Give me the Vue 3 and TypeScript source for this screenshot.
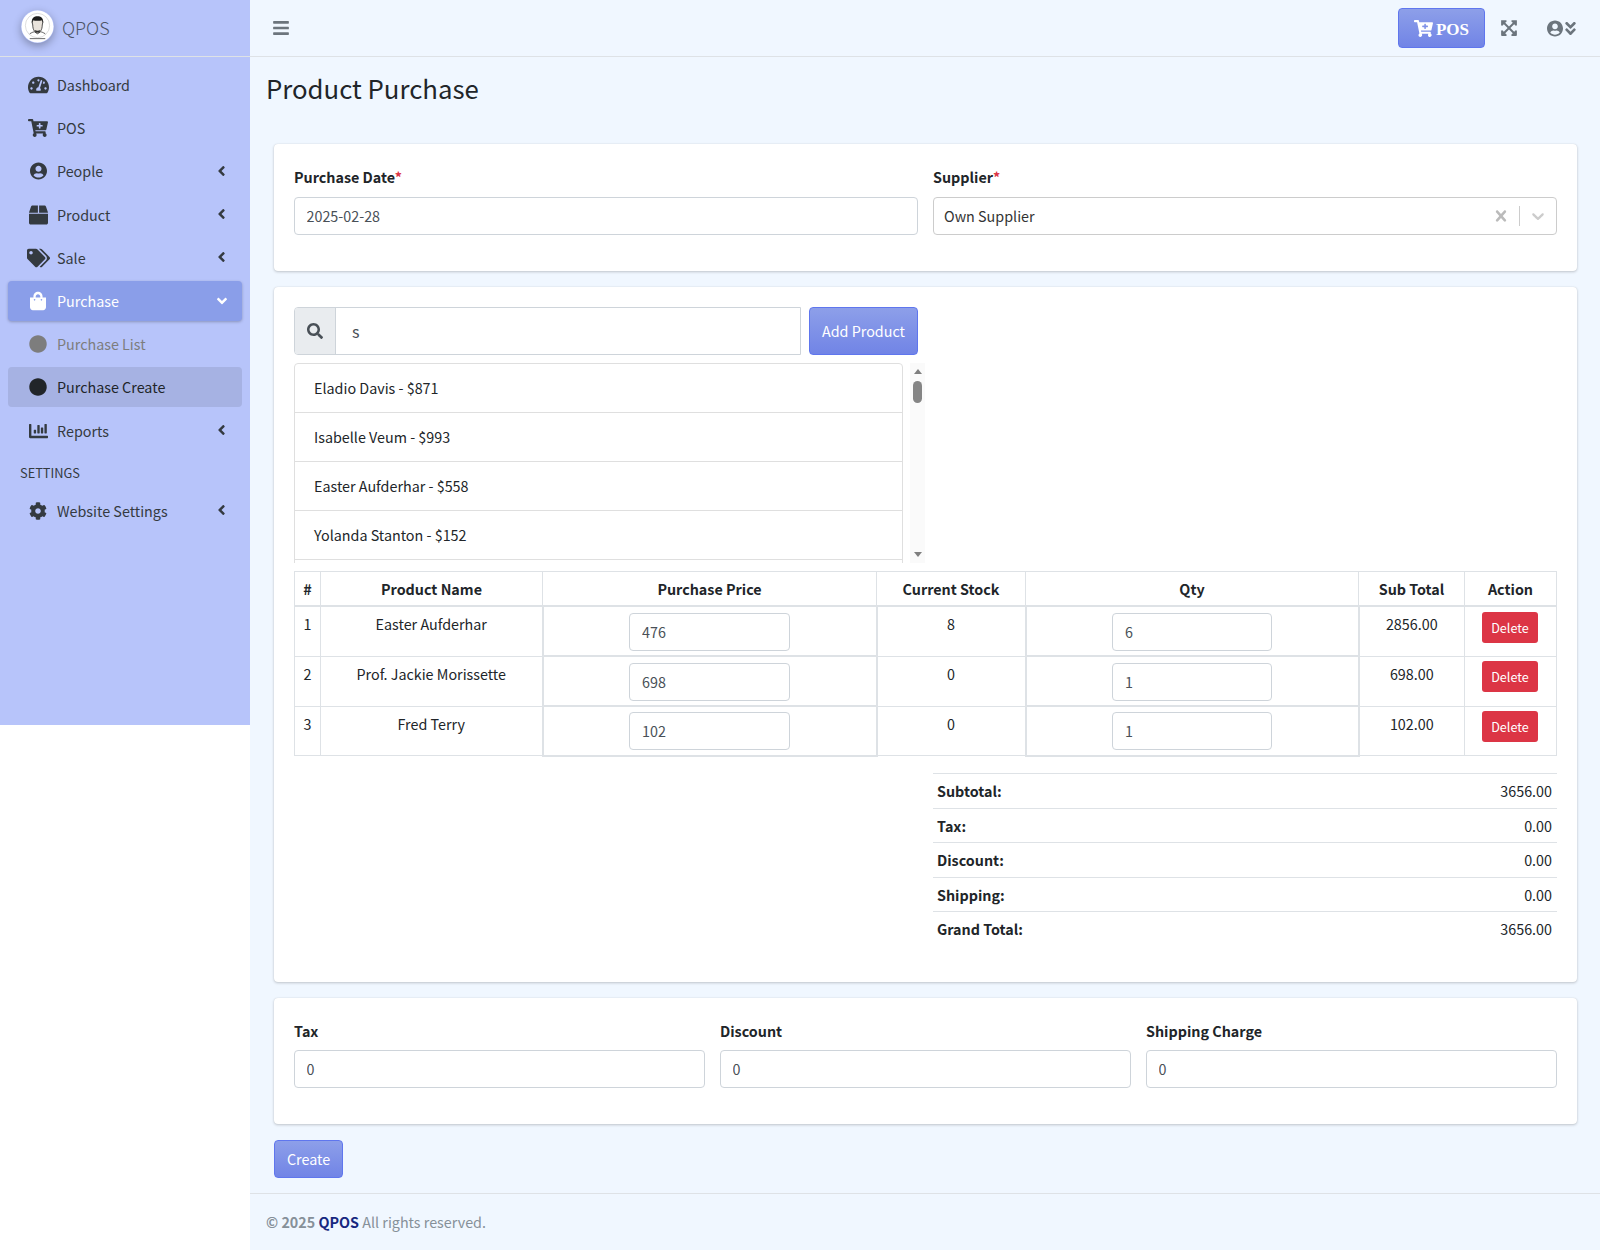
<script setup lang="ts">
type Icon = { vb: string; d: string };

const icons: Record<string, Icon> = {
  bars: { vb: '0 0 448 512', d: 'M16 132h416c8.837 0 16-7.163 16-16V76c0-8.837-7.163-16-16-16H16C7.163 60 0 67.163 0 76v40c0 8.837 7.163 16 16 16zm0 160h416c8.837 0 16-7.163 16-16v-40c0-8.837-7.163-16-16-16H16c-8.837 0-16 7.163-16 16v40c0 8.837 7.163 16 16 16zm0 160h416c8.837 0 16-7.163 16-16v-40c0-8.837-7.163-16-16-16H16c-8.837 0-16 7.163-16 16v40c0 8.837 7.163 16 16 16z' },
  search: { vb: '0 0 512 512', d: 'M505 442.7L405.3 343c-4.5-4.5-10.6-7-17-7H372c27.6-35.3 44-79.7 44-128C416 93.1 322.9 0 208 0S0 93.1 0 208s93.1 208 208 208c48.3 0 92.7-16.4 128-44v16.3c0 6.4 2.5 12.5 7 17l99.7 99.7c9.4 9.4 24.6 9.4 33.9 0l28.3-28.3c9.4-9.4 9.4-24.6.1-34zM208 336c-70.7 0-128-57.2-128-128 0-70.7 57.2-128 128-128 70.7 0 128 57.2 128 128 0 70.7-57.2 128-128 128z' },
  user: { vb: '0 0 496 512', d: 'M248 8C111 8 0 119 0 256s111 248 248 248 248-111 248-248S385 8 248 8zm0 96c48.6 0 88 39.4 88 88s-39.4 88-88 88-88-39.4-88-88 39.4-88 88-88zm0 344c-58.7 0-111.3-26.6-146.5-68.2 18.8-35.4 55.6-59.8 98.5-59.8 2.4 0 4.8.4 7.1 1.1 13 4.2 26.6 6.9 40.9 6.9 14.3 0 28-2.7 40.9-6.9 2.3-.7 4.7-1.1 7.1-1.1 42.9 0 79.7 24.4 98.5 59.8C359.3 421.4 306.7 448 248 448z' },
  left: { vb: '0 0 256 512', d: 'M31.7 239l136-136c9.4-9.4 24.6-9.4 33.9 0l22.6 22.6c9.4 9.4 9.4 24.6 0 33.9L127.9 256l96.4 96.4c9.4 9.4 9.4 24.6 0 33.9L201.7 409c-9.4 9.4-24.6 9.4-33.9 0l-136-136c-9.5-9.4-9.5-24.6-.1-34z' },
  down: { vb: '0 0 320 512', d: 'M143 352.3L7 216.3c-9.4-9.4-9.4-24.6 0-33.9l22.6-22.6c9.4-9.4 24.6-9.4 33.9 0l96.4 96.4 96.4-96.4c9.4-9.4 24.6-9.4 33.9 0l22.6 22.6c9.4 9.4 9.4 24.6 0 33.9l-136 136c-9.2 9.4-24.4 9.4-33.8 0z' },
  doubleDown: { vb: '0 0 320 512', d: 'M143 256.3L7 120.3c-9.4-9.4-9.4-24.6 0-33.9l22.6-22.6c9.4-9.4 24.6-9.4 33.9 0l96.4 96.4 96.4-96.4c9.4-9.4 24.6-9.4 33.9 0L313 86.3c9.4 9.4 9.4 24.6 0 33.9l-136 136c-9.4 9.5-24.6 9.5-34 .1zm34 192l136-136c9.4-9.4 9.4-24.6 0-33.9l-22.6-22.6c-9.4-9.4-24.6-9.4-33.9 0L160 352.1l-96.4-96.4c-9.4-9.4-24.6-9.4-33.9 0L7 278.3c-9.4 9.4-9.4 24.6 0 33.9l136 136c9.4 9.5 24.6 9.5 34 .1z' },
  cog: { vb: '0 0 512 512', d: 'M487.4 315.7l-42.6-24.6c4.3-23.2 4.3-47 0-70.2l42.6-24.6c4.9-2.8 7.1-8.6 5.5-14-11.1-35.6-30-67.8-54.7-94.6-3.8-4.1-10-5.1-14.8-2.3L380.8 110c-17.9-15.4-38.5-27.3-60.8-35.1V25.8c0-5.6-3.9-10.5-9.4-11.7-36.7-8.2-74.3-7.8-109.2 0-5.5 1.2-9.4 6.1-9.4 11.7V75c-22.2 7.9-42.8 19.8-60.8 35.1L88.7 85.5c-4.9-2.8-11-1.9-14.8 2.3-24.7 26.7-43.6 58.9-54.7 94.6-1.7 5.4.6 11.2 5.5 14L67.3 221c-4.3 23.2-4.3 47 0 70.2l-42.6 24.6c-4.9 2.8-7.1 8.6-5.5 14 11.1 35.6 30 67.8 54.7 94.6 3.8 4.1 10 5.1 14.8 2.3l42.6-24.6c17.9 15.4 38.5 27.3 60.8 35.1v49.2c0 5.6 3.9 10.5 9.4 11.7 36.7 8.2 74.3 7.8 109.2 0 5.5-1.2 9.4-6.1 9.4-11.7v-49.2c22.2-7.9 42.8-19.8 60.8-35.1l42.6 24.6c4.9 2.8 11 1.9 14.8-2.3 24.7-26.7 43.6-58.9 54.7-94.6 1.5-5.5-.7-11.3-5.6-14.1zM256 336c-44.1 0-80-35.9-80-80s35.9-80 80-80 80 35.9 80 80-35.9 80-80 80z' },
  chart: { vb: '0 0 512 512', d: 'M332.8 320h38.4c6.4 0 12.8-6.4 12.8-12.8V172.8c0-6.4-6.4-12.8-12.8-12.8h-38.4c-6.4 0-12.8 6.4-12.8 12.8v134.4c0 6.4 6.4 12.8 12.8 12.8zm96 0h38.4c6.4 0 12.8-6.4 12.8-12.8V76.8c0-6.4-6.4-12.8-12.8-12.8h-38.4c-6.4 0-12.8 6.4-12.8 12.8v230.4c0 6.4 6.4 12.8 12.8 12.8zm-288 0h38.4c6.4 0 12.8-6.4 12.8-12.8v-70.4c0-6.4-6.4-12.8-12.8-12.8h-38.4c-6.4 0-12.8 6.4-12.8 12.8v70.4c0 6.4 6.4 12.8 12.8 12.8zm96 0h38.4c6.4 0 12.8-6.4 12.8-12.8V108.8c0-6.4-6.4-12.8-12.8-12.8h-38.4c-6.4 0-12.8 6.4-12.8 12.8v198.4c0 6.4 6.4 12.8 12.8 12.8zM496 384H64V80c0-8.84-7.16-16-16-16H16C7.16 64 0 71.16 0 80v336c0 17.67 14.33 32 32 32h464c8.84 0 16-7.16 16-16v-32c0-8.84-7.16-16-16-16z' },
  bag: { vb: '0 0 448 512', d: 'M352 160v-32C352 57.42 294.579 0 224 0 153.42 0 96 57.42 96 128v32H0v272c0 44.183 35.817 80 80 80h288c44.183 0 80-35.817 80-80V160h-96zm-192-32c0-35.29 28.71-64 64-64s64 28.71 64 64v32H160v-32zm160 120c-13.255 0-24-10.745-24-24s10.745-24 24-24 24 10.745 24 24-10.745 24-24 24zm-192 0c-13.255 0-24-10.745-24-24s10.745-24 24-24 24 10.745 24 24-10.745 24-24 24z' },
  box: { vb: '0 0 512 512', d: 'M509.5 184.6L458.9 32.8C452.4 13.2 434.1 0 413.4 0H272v192h238.7c-.4-2.5-.4-5-1.2-7.4zM240 0H98.6c-20.7 0-39 13.2-45.5 32.8L2.5 184.6c-.8 2.4-.8 4.9-1.2 7.4H240V0zM0 224v240c0 26.5 21.5 48 48 48h416c26.5 0 48-21.5 48-48V224H0z' },
  tags: { vb: '0 0 640 512', d: 'M497.941 225.941L286.059 14.059A48 48 0 0 0 252.118 0H48C21.49 0 0 21.49 0 48v204.118a48 48 0 0 0 14.059 33.941l211.882 211.882c18.744 18.745 49.136 18.746 67.882 0l204.118-204.118c18.745-18.745 18.745-49.137 0-67.882zM112 160c-26.51 0-48-21.49-48-48s21.49-48 48-48 48 21.49 48 48-21.49 48-48 48zm513.941 133.823L421.823 497.941c-18.745 18.745-49.137 18.745-67.882 0l-.36-.36L527.64 323.522c16.999-16.999 26.36-39.6 26.36-63.64s-9.362-46.641-26.36-63.64L331.397 0h48.721a48 48 0 0 1 33.941 14.059l211.882 211.882c18.745 18.745 18.745 49.137 0 67.882z' },
  cart: { vb: '0 0 576 512', d: 'M504.717 320H211.572l6.545 32h268.418c15.401 0 26.816 14.301 23.403 29.319l-5.517 24.276C523.112 414.668 536 433.828 536 456c0 31.202-25.519 56.444-56.824 55.994-29.823-.429-54.35-24.631-55.155-54.447-.44-16.287 6.085-31.049 16.803-41.548H231.176C241.553 426.165 248 440.326 248 456c0 31.813-26.528 57.431-58.67 55.938-28.54-1.325-51.751-24.385-53.251-52.917-1.158-22.034 10.436-41.455 28.051-51.586L93.883 64H24C10.745 64 0 53.255 0 40V24C0 10.745 10.745 0 24 0h102.529c11.401 0 21.228 8.021 23.513 19.19L159.208 64H551.99c15.401 0 26.816 14.301 23.403 29.319l-47.273 208C525.637 312.246 515.923 320 504.717 320zM408 168h-48v-40c0-8.837-7.163-16-16-16h-16c-8.837 0-16 7.163-16 16v40h-48c-8.837 0-16 7.163-16 16v16c0 8.837 7.163 16 16 16h48v40c0 8.837 7.163 16 16 16h16c8.837 0 16-7.163 16-16v-40h48c8.837 0 16-7.163 16-16v-16c0-8.837-7.163-16-16-16z' },
  gauge: { vb: '0 0 576 512', d: 'M288 32C128.94 32 0 160.94 0 320c0 52.8 14.25 102.26 39.06 144.8 5.61 9.62 16.3 15.2 27.44 15.2h443c11.14 0 21.83-5.58 27.44-15.2C561.75 422.26 576 372.8 576 320c0-159.06-128.94-288-288-288zm0 64c14.71 0 26.58 10.13 30.32 23.65-1.11 2.26-2.64 4.23-3.45 6.67l-9.22 27.67c-5.13 3.49-10.97 6.01-17.64 6.01-17.67 0-32-14.33-32-32S270.33 96 288 96zM96 384c-17.67 0-32-14.33-32-32s14.33-32 32-32 32 14.33 32 32-14.33 32-32 32zm48-160c-17.67 0-32-14.33-32-32s14.33-32 32-32 32 14.33 32 32-14.33 32-32 32zm246.77-72.41l-61.33 184C343.13 347.33 352 364.54 352 384c0 11.72-3.38 22.55-8.88 32H232.88c-5.5-9.45-8.88-20.28-8.88-32 0-33.94 26.5-61.43 59.9-63.59l61.34-184.01c4.17-12.56 17.73-19.45 30.36-15.17 12.57 4.19 19.35 17.79 15.17 30.36zm14.66 57.2l15.52-46.55c3.47-1.29 7.13-2.23 11.05-2.23 17.67 0 32 14.33 32 32s-14.33 32-32 32c-11.38-.01-20.89-6.28-26.57-15.22zM480 384c-17.67 0-32-14.33-32-32s14.33-32 32-32 32 14.33 32 32-14.33 32-32 32z' },
  expand: { vb: '0 0 448 512', d: 'M448 344v112a23.94 23.94 0 0 1-24 24H312c-21.39 0-32.09-25.9-17-41l36.2-36.2L224 295.6 116.77 402.9 153 439c15.09 15.1 4.39 41-17 41H24a23.94 23.94 0 0 1-24-24V344c0-21.4 25.89-32.1 41-17l36.19 36.2L184.46 256 77.18 148.7 41 185c-15.1 15.1-41 4.4-41-17V56a23.94 23.94 0 0 1 24-24h112c21.39 0 32.09 25.9 17 41l-36.2 36.2L224 216.4l107.23-107.3L295 73c-15.09-15.1-4.39-41 17-41h112a23.94 23.94 0 0 1 24 24v112c0 21.4-25.89 32.1-41 17l-36.19-36.2L263.54 256l107.28 107.3L407 327.1c15.1-15.2 41-4.5 41 16.9z' },
  circle: { vb: '0 0 512 512', d: 'M256 8C119 8 8 119 8 256s111 248 248 248 248-111 248-248S393 8 256 8z' },
};

const menu = [
  { label: 'Dashboard', icon: 'gauge', w: 21 },
  { label: 'POS', icon: 'cart', w: 20 },
  { label: 'People', icon: 'user', arrow: true, w: 17 },
  { label: 'Product', icon: 'box', w: 19, arrow: true },
  { label: 'Sale', icon: 'tags', w: 23, arrow: true },
  { label: 'Purchase', icon: 'bag', w: 16, open: true },
  { label: 'Purchase List', icon: 'circle', w: 18, sub: true },
  { label: 'Purchase Create', icon: 'circle', w: 18, sub: true, current: true },
  { label: 'Reports', icon: 'chart', w: 19, arrow: true },
];

const results = ['Eladio Davis - $871', 'Isabelle Veum - $993', 'Easter Aufderhar - $558', 'Yolanda Stanton - $152'];

const rows = [
  { name: 'Easter Aufderhar', price: 476, stock: 8, qty: 6, total: '2856.00' },
  { name: 'Prof. Jackie Morissette', price: 698, stock: 0, qty: 1, total: '698.00' },
  { name: 'Fred Terry', price: 102, stock: 0, qty: 1, total: '102.00' },
];

const totals = [
  { label: 'Subtotal:', value: '3656.00' },
  { label: 'Tax:', value: '0.00' },
  { label: 'Discount:', value: '0.00' },
  { label: 'Shipping:', value: '0.00' },
  { label: 'Grand Total:', value: '3656.00' },
];

const charges = ['Tax', 'Discount', 'Shipping Charge'];
</script>

<template>
  <div class="layout">
    <aside class="sidebar">
      <div class="brand">
        <svg class="logo" viewBox="0 0 34 34">
          <circle cx="17" cy="17" r="16.5" fill="#fff" />
          <circle cx="17" cy="16" r="12.5" fill="none" stroke="#bbb" stroke-width="0.5" />
          <path d="M11.5 12.5c0-5 11-5.500 11 0l-.6 3c0 5-2.400 8-4.900 8s-4.900-3-4.900-8z" fill="#e9e3dc" stroke="#222" stroke-width="0.8" />
          <path d="M11.300 14c-1-6 2.500-7.500 5.700-7.500s6.700 1.500 5.700 7.500l-.8-3.500c-3 .8-6.800.8-9.700 0z" fill="#1c1c1c" />
          <path d="M14 20.500c2 1 4 1 6 0l-1 2.500h-4z" fill="#333" />
          <path d="M9 24.500c2.500-1.500 4-2 5-2l3 2 3-2c1 0 2.500.5 5 2" fill="none" stroke="#333" stroke-width="0.8" />
          <rect x="9" y="29" width="16" height="1" fill="#666" />
        </svg>
        <span class="brand-text">QPOS</span>
      </div>
      <nav class="menu">
        <a
          v-for="item in menu"
          :key="item.label"
          class="menu-item"
          :class="{ open: item.open, sub: item.sub, current: item.current }"
        >
          <span class="menu-icon">
            <svg :viewBox="icons[item.icon].vb" :style="{ width: item.w + 'px' }"><path :d="icons[item.icon].d" /></svg>
          </span>
          <span class="menu-label">{{ item.label }}</span>
          <svg v-if="item.arrow" class="arrow" :viewBox="icons.left.vb"><path :d="icons.left.d" /></svg>
          <svg v-if="item.open" class="arrow arrow-down" :viewBox="icons.down.vb"><path :d="icons.down.d" /></svg>
        </a>
        <div class="menu-header">SETTINGS</div>
        <a class="menu-item">
          <span class="menu-icon">
            <svg class="cog" :viewBox="icons.cog.vb"><path :d="icons.cog.d" /></svg>
          </span>
          <span class="menu-label">Website Settings</span>
          <svg class="arrow" :viewBox="icons.left.vb"><path :d="icons.left.d" /></svg>
        </a>
      </nav>
    </aside>

    <div class="main">
      <header class="topbar">
        <svg class="bars" :viewBox="icons.bars.vb"><path :d="icons.bars.d" /></svg>
        <div class="topbar-right">
          <button class="btn pos-btn">
            <svg :viewBox="icons.cart.vb"><path :d="icons.cart.d" /></svg>
            <span>POS</span>
          </button>
          <svg class="expand" :viewBox="icons.expand.vb"><path :d="icons.expand.d" /></svg>
          <div class="user-menu">
            <svg class="user-icon" :viewBox="icons.user.vb"><path :d="icons.user.d" /></svg>
            <svg class="user-arrow" :viewBox="icons.doubleDown.vb"><path :d="icons.doubleDown.d" /></svg>
          </div>
        </div>
      </header>

      <div class="page-head">
        <h1>Product Purchase</h1>
      </div>

      <section class="content">
        <div class="card">
          <div class="two-col">
            <div>
              <label class="field-label">Purchase Date<span class="req">*</span></label>
              <input class="input" value="2025-02-28" />
            </div>
            <div>
              <label class="field-label">Supplier<span class="req">*</span></label>
              <div class="select">
                <span class="select-value">Own Supplier</span>
                <svg class="select-x" viewBox="0 0 20 20"><path d="M14.348 14.849c-.469.469-1.229.469-1.697 0L10 11.819l-2.651 3.029c-.469.469-1.229.469-1.697 0-.469-.469-.469-1.229 0-1.697l2.758-3.15-2.759-3.152c-.469-.469-.469-1.228 0-1.697s1.228-.469 1.697 0L10 8.183l2.651-3.031c.469-.469 1.228-.469 1.697 0s.469 1.229 0 1.697l-2.758 3.152 2.758 3.15c.469.469.469 1.229 0 1.698z" /></svg>
                <span class="select-sep"></span>
                <svg class="select-arrow" viewBox="0 0 20 20"><path d="M4.516 7.548c.436-.446 1.043-.481 1.576 0L10 11.295l3.908-3.747c.533-.481 1.141-.446 1.574 0 .436.445.408 1.197 0 1.615-.406.418-4.695 4.502-4.695 4.502-.217.223-.502.335-.787.335s-.57-.112-.789-.335c0 0-4.287-4.084-4.695-4.502s-.436-1.17 0-1.615z" /></svg>
              </div>
            </div>
          </div>
        </div>

        <div class="card card-products">
          <div class="search-row">
            <div class="search-group">
              <span class="search-addon">
                <svg :viewBox="icons.search.vb"><path :d="icons.search.d" /></svg>
              </span>
              <input class="search-input" value="s" />
            </div>
            <button class="btn add-btn">Add Product</button>
          </div>

          <div class="results">
            <ul class="results-list">
              <li v-for="r in results" :key="r">{{ r }}</li>
              <li></li>
            </ul>
            <div class="scrollbar">
              <span class="tri-up"></span>
              <span class="thumb"></span>
              <span class="tri-down"></span>
            </div>
          </div>

          <table class="items">
            <colgroup>
              <col class="c-num" />
              <col class="c-name" />
              <col class="c-price" />
              <col class="c-stock" />
              <col class="c-qty" />
              <col class="c-sub" />
              <col class="c-act" />
            </colgroup>
            <thead>
              <tr>
                <th>#</th>
                <th>Product Name</th>
                <th>Purchase Price</th>
                <th>Current Stock</th>
                <th>Qty</th>
                <th>Sub Total</th>
                <th>Action</th>
              </tr>
            </thead>
            <tbody>
              <tr v-for="(row, i) in rows" :key="row.name">
                <td class="num">{{ i + 1 }}</td>
                <td>{{ row.name }}</td>
                <td class="has-input"><input class="input cell-input" :value="row.price" /></td>
                <td>{{ row.stock }}</td>
                <td class="has-input"><input class="input cell-input qty-input" :value="row.qty" /></td>
                <td>{{ row.total }}</td>
                <td class="act"><button class="del-btn">Delete</button></td>
              </tr>
            </tbody>
          </table>

          <div class="totals-wrap">
            <table class="totals">
              <tr v-for="t in totals" :key="t.label">
                <th>{{ t.label }}</th>
                <td>{{ t.value }}</td>
              </tr>
            </table>
          </div>
        </div>

        <div class="card card-charges">
          <div class="three-col">
            <div v-for="c in charges" :key="c">
              <label class="field-label">{{ c }}</label>
              <input class="input" value="0" />
            </div>
          </div>
        </div>

        <button class="btn create-btn">Create</button>
      </section>

      <footer class="footer">
        <strong>© 2025 <span class="footer-brand">QPOS</span></strong> All rights reserved.
      </footer>
    </div>
  </div>
</template>

<style>
body {
  margin: 0;
  background: #fff;
}
</style>

<style scoped>
.layout {
  display: flex;
  align-items: flex-start;
  font-family: "Noto Sans CJK JP", "Noto Sans", sans-serif;
  font-size: 14.33px;
  color: #212529;
  line-height: 22px;
}

.sidebar {
  width: 250px;
  height: 725px;
  flex-shrink: 0;
  background: #b7c4fa;
}

.brand {
  height: 56px;
  border-bottom: 1px solid #dee2e6;
  display: flex;
  align-items: center;
  padding-left: 21px;
  gap: 8px;
}

.logo {
  width: 33px;
  height: 33px;
  margin-top: -3px;
  border-radius: 50%;
  box-shadow: 0 3px 8px rgba(0, 0, 0, 0.3);
}

.brand-text {
  font-size: 18px;
  font-weight: 300;
  color: #4d5568;
  margin-top: -2px;
}

.menu {
  padding: 7.8px 8px 0;
}

.menu-item {
  height: 40.25px;
  margin-bottom: 3px;
  display: flex;
  align-items: center;
  border-radius: 4px;
  color: #343a40;
  position: relative;
}

.menu-icon {
  width: 49px;
  flex-shrink: 0;
  display: flex;
  justify-content: center;
  padding-left: 11px;
  box-sizing: border-box;
  fill: #343a40;
}

.menu-icon svg {
  height: 20px;
  display: block;
}

.menu-icon .cog {
  width: 18px;
}

.arrow {
  position: absolute;
  right: 16px;
  top: 11.5px;
  width: 9px;
  height: 16px;
  fill: #343a40;
}

.arrow-down {
  width: 12px;
  right: 14px;
  fill: #fff;
}

.menu-item.open {
  background: #8a9ee9;
  box-shadow: 0 1px 3px rgba(0, 0, 0, 0.25);
  color: #fff;
  margin-bottom: 2.5px;
}

.menu-item.open .menu-icon {
  fill: #fff;
}

.menu-item.sub {
  color: #7d7d7d;
}

.menu-item.sub .menu-icon {
  fill: #7d7d7d;
}

.menu-item.current {
  background: #a6b2e3;
  color: #212529;
  margin-bottom: 3.5px;
}

.menu-item.current .menu-icon {
  fill: #212529;
}

.menu-header {
  font-size: 12.8px;
  color: #343a40;
  padding-left: 12px;
  height: 25px;
  line-height: 25px;
  margin-top: 9px;
  margin-bottom: 5.5px;
}

.main {
  flex: 1;
  background: #f0f7ff;
  min-width: 0;
  height: 1250px;
  display: flex;
  flex-direction: column;
}

.topbar {
  height: 56px;
  border-bottom: 1px solid #dee2e6;
  display: flex;
  align-items: center;
  justify-content: space-between;
  padding: 0 24px 0 23px;
}

.bars {
  width: 16px;
  height: 18px;
  fill: #6c757d;
}

.topbar-right {
  display: flex;
  align-items: center;
}

.btn {
  font-family: inherit;
  font-size: 14.33px;
  color: #fff;
  border: 1px solid #5f76ee;
  border-radius: 4px;
  background: linear-gradient(180deg, #8d9fe9, #7184e6);
  padding: 0 0 2px;
}

.pos-btn {
  width: 87px;
  height: 40px;
  padding: 0;
  font-family: "Liberation Serif", serif;
  font-weight: 700;
  font-size: 17px;
  display: flex;
  align-items: center;
  justify-content: center;
  gap: 3px;
}

.pos-btn span {
  padding-top: 3px;
}

.pos-btn svg {
  width: 19px;
  height: 17px;
  fill: #fff;
}

.expand {
  width: 16px;
  height: 18px;
  fill: #6c757d;
  margin-left: 16px;
}

.user-menu {
  display: flex;
  align-items: center;
  margin-left: 30px;
  gap: 2px;
}

.user-icon {
  width: 16px;
  height: 17px;
  fill: #6c757d;
}

.user-arrow {
  width: 11px;
  height: 17px;
  fill: #6c757d;
}

.page-head {
  height: 87px;
  padding: 14px 16px 0;
  box-sizing: border-box;
}

h1 {
  margin: 0;
  font-size: 25.76px;
  font-weight: 400;
  line-height: 34px;
}

.content {
  padding: 0 23px 0 24px;
  flex: 1;
}

.card {
  background: #fff;
  border-radius: 4px;
  box-shadow: 0 0 1px rgba(0, 0, 0, 0.125), 0 1px 3px rgba(0, 0, 0, 0.2);
  padding: 20px 20px 36px;
  margin-bottom: 16px;
}

.card-products {
  height: 695px;
  box-sizing: border-box;
}

.card-charges .field-label {
  margin-bottom: 6px;
}

.two-col {
  display: grid;
  grid-template-columns: 1fr 1fr;
  column-gap: 15px;
}

.three-col {
  display: grid;
  grid-template-columns: 1fr 1fr 1fr;
  column-gap: 15px;
}

.field-label {
  display: block;
  font-weight: 700;
  font-size: 14.33px;
  line-height: 26px;
  margin-bottom: 7px;
}

.req {
  color: #dc3545;
}

.input {
  display: block;
  width: 100%;
  height: 38px;
  box-sizing: border-box;
  border: 1px solid #ced4da;
  border-radius: 4px;
  padding: 0 11.5px 2px;
  font-family: inherit;
  font-size: 14.33px;
  color: #495057;
  background: #fff;
}

.select {
  height: 38px;
  box-sizing: border-box;
  border: 1px solid #ccc;
  border-radius: 4px;
  display: flex;
  align-items: center;
  padding-left: 10px;
  color: #333;
}

.select-value {
  flex: 1;
}

.select-x {
  width: 22px;
  height: 22px;
  fill: #bbb;
}

.select-sep {
  width: 1px;
  height: 20px;
  background: #ccc;
  margin: 0 8px 0 7px;
}

.select-arrow {
  width: 20px;
  height: 20px;
  fill: #ccc;
  margin-right: 8px;
}

.search-row {
  display: flex;
  gap: 8px;
  width: 624px;
}

.search-group {
  flex: 1;
  display: flex;
  height: 48px;
  border: 1px solid #ced4da;
  box-sizing: border-box;
  border-radius: 4px 0 0 4px;
  overflow: hidden;
}

.search-addon {
  width: 40px;
  background: #e9ecef;
  border-right: 1px solid #ced4da;
  display: flex;
  align-items: center;
  justify-content: center;
  fill: #495057;
}

.search-addon svg {
  width: 16px;
  height: 16px;
}

.search-input {
  flex: 1;
  min-width: 0;
  border: 0;
  padding: 0 16px;
  font-family: inherit;
  font-size: 16px;
  color: #495057;
}

.add-btn {
  width: 109px;
  height: 48px;
}

.results {
  width: 631px;
  height: 200px;
  margin-top: 8px;
  display: flex;
  justify-content: space-between;
  overflow: hidden;
}

.results-list {
  list-style: none;
  margin: 0;
  padding: 0;
  width: 609px;
  height: 260px;
  box-sizing: border-box;
  border: 1px solid #dfdfdf;
  border-radius: 4px;
}

.results-list li {
  height: 49px;
  box-sizing: border-box;
  border-bottom: 1px solid #dfdfdf;
  padding: 0 19px;
  line-height: 48px;
}

.scrollbar {
  width: 15px;
  background: #fafafa;
  display: flex;
  flex-direction: column;
  align-items: center;
}

.tri-up,
.tri-down {
  width: 0;
  height: 0;
  border-left: 4.5px solid transparent;
  border-right: 4.5px solid transparent;
}

.tri-up {
  border-bottom: 5px solid #7f7f7f;
  margin-top: 6px;
}

.tri-down {
  border-top: 5px solid #7f7f7f;
  margin-top: auto;
  margin-bottom: 6px;
}

.thumb {
  width: 9px;
  height: 22px;
  border-radius: 5px;
  background: #858585;
  margin-top: 7px;
}

.items {
  width: 1262px;
  margin-top: 8px;
  border-collapse: collapse;
  table-layout: fixed;
}

.c-num { width: 26px; }
.c-name { width: 222px; }
.c-price { width: 334px; }
.c-stock { width: 149px; }
.c-qty { width: 333px; }
.c-sub { width: 106px; }
.c-act { width: 92px; }

.items th {
  height: 32px;
  padding: 1px 0 0;
  border: 1px solid #dee2e6;
  border-bottom-width: 2px;
  font-weight: 700;
  font-size: 14.33px;
  text-align: center;
}

.items td {
  height: 50px;
  border: 1px solid #dee2e6;
  padding: 6px 0 0;
  text-align: center;
  vertical-align: top;
  box-sizing: border-box;
}

.items tr:last-child td {
  height: 49.5px;
}

.items td.has-input {
  border-width: 2px;
  padding: 2px 0 0;
  vertical-align: middle;
}

.items tr:last-child td.has-input {
  padding: 0;
}

.items td.act {
  padding: 4.5px 0 0;
}

.cell-input {
  width: 161px;
  margin: 0 auto;
  padding: 0 12px 2px;
}

.items tr:last-child .cell-input {
  padding-bottom: 0;
}

.qty-input {
  width: 160px;
}

.del-btn {
  width: 56px;
  height: 31px;
  margin-right: 1px;
  border: 0;
  border-radius: 3px;
  background: #dc3545;
  color: #fff;
  font-family: inherit;
  font-size: 12.6px;
  padding: 0;
}

.totals-wrap {
  margin: 16px 0 0 639px;
}

.totals {
  width: 100%;
  border-collapse: collapse;
}

.totals th,
.totals td {
  box-sizing: border-box;
  height: 34px;
  border-top: 1px solid #dee2e6;
  padding: 6px 5px 0 4px;
  font-size: 14.33px;
  vertical-align: top;
}

.totals tr:nth-child(odd) th,
.totals tr:nth-child(odd) td {
  height: 35px;
}

.totals th {
  text-align: left;
  font-weight: 700;
}

.totals td {
  text-align: right;
}

.create-btn {
  width: 69px;
  height: 38px;
  display: block;
}

.footer {
  height: 57px;
  border-top: 1px solid #dee2e6;
  padding-left: 16px;
  box-sizing: border-box;
  line-height: 56px;
  color: #869099;
}

.footer-brand {
  color: #17277f;
}
</style>
